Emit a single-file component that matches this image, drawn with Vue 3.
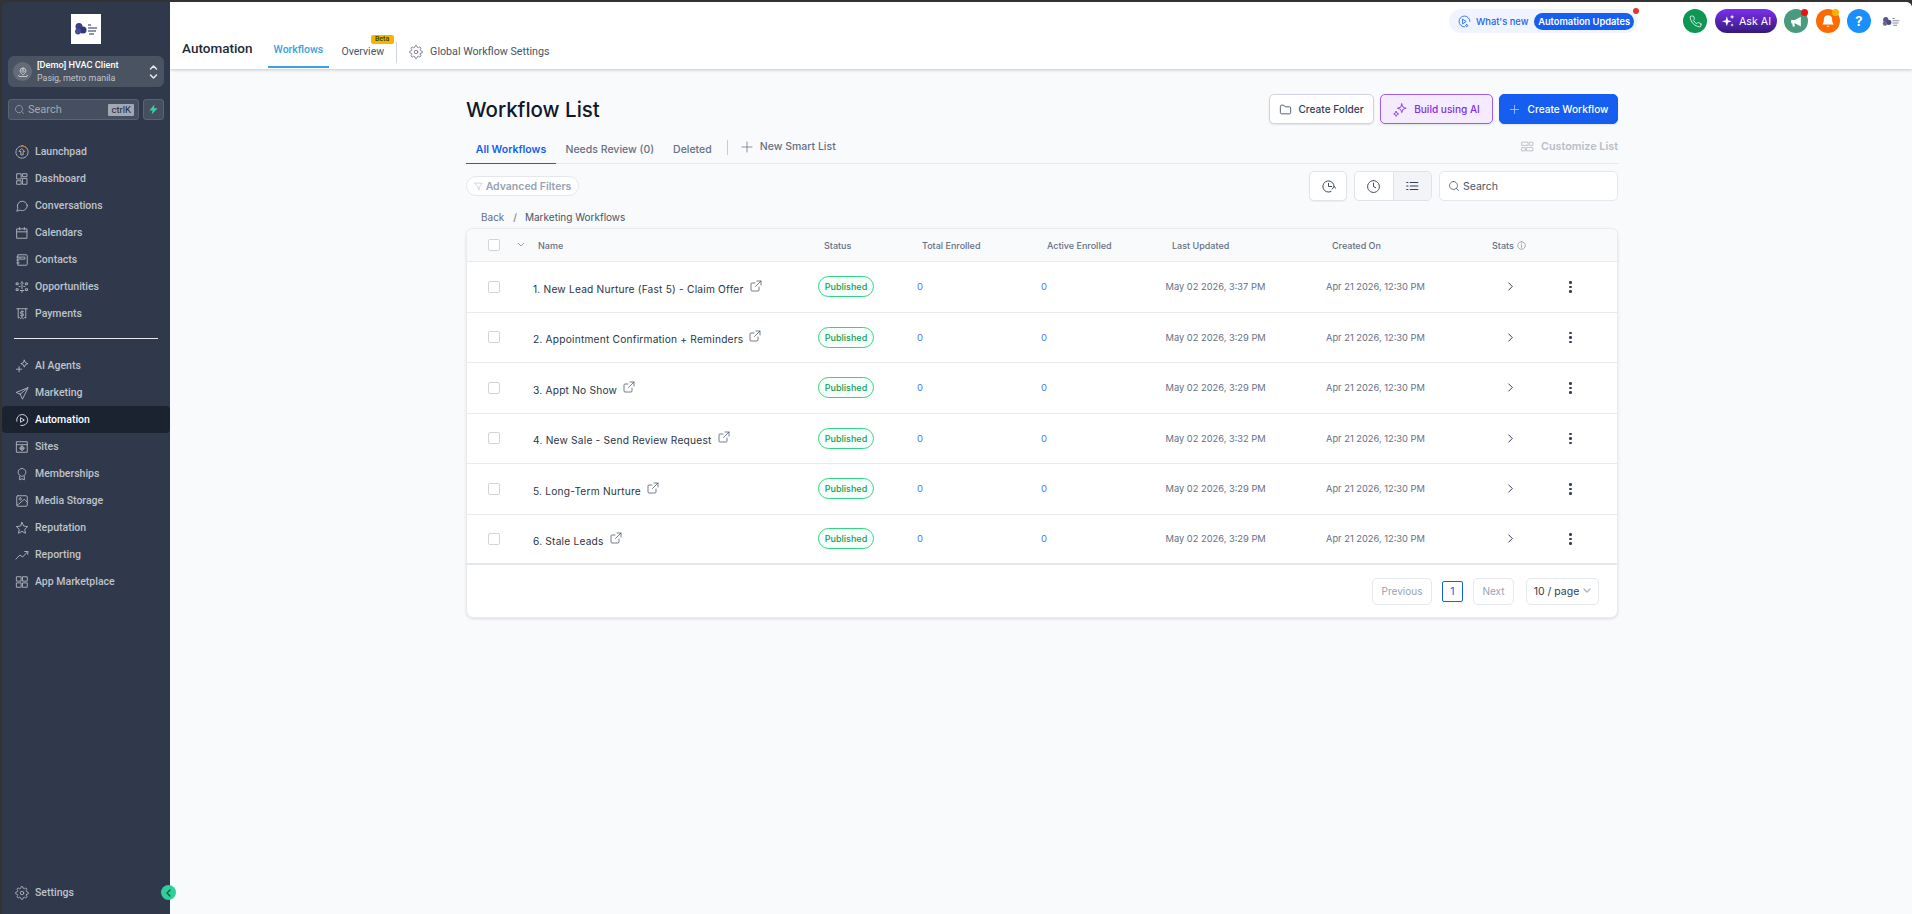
<script setup>
const gear = 'M19.4 15a1.65 1.65 0 0 0 .33 1.82l.06.06a2 2 0 0 1 0 2.83 2 2 0 0 1-2.83 0l-.06-.06a1.65 1.65 0 0 0-1.82-.33 1.65 1.65 0 0 0-1 1.51V21a2 2 0 0 1-2 2 2 2 0 0 1-2-2v-.09A1.65 1.65 0 0 0 9 19.4a1.65 1.65 0 0 0-1.82.33l-.06.06a2 2 0 0 1-2.83 0 2 2 0 0 1 0-2.83l.06-.06a1.65 1.65 0 0 0 .33-1.82 1.65 1.65 0 0 0-1.51-1H3a2 2 0 0 1-2-2 2 2 0 0 1 2-2h.09A1.65 1.65 0 0 0 4.6 9a1.65 1.65 0 0 0-.33-1.82l-.06-.06a2 2 0 0 1 0-2.83 2 2 0 0 1 2.83 0l.06.06a1.65 1.65 0 0 0 1.82.33H9a1.65 1.65 0 0 0 1-1.51V3a2 2 0 0 1 2-2 2 2 0 0 1 2 2v.09a1.65 1.65 0 0 0 1 1.51 1.65 1.65 0 0 0 1.82-.33l.06-.06a2 2 0 0 1 2.83 0 2 2 0 0 1 0 2.83l-.06.06a1.65 1.65 0 0 0-.33 1.82V9a1.65 1.65 0 0 0 1.51 1H21a2 2 0 0 1 2 2 2 2 0 0 1-2 2h-.09a1.65 1.65 0 0 0-1.51 1zM15 12a3 3 0 1 1-6 0 3 3 0 0 1 6 0z'

const navTop = [
  { label: 'Launchpad', accent: 'M12 1.500a10.500 10.500 0 0 1 9.800 6.700', paths: ['M12 1.500a10.500 10.500 0 1 0 .01 0', 'M12 6.500l4.500 4.500H14v6h-4v-6H7.500z'] },
  { label: 'Dashboard', paths: ['M3.5 3h7v9h-7z', 'M13.5 3h7v5h-7z', 'M13.5 11h7v10h-7z', 'M3.5 15h7v6h-7z'] },
  { label: 'Conversations', paths: ['M21 11.5a8.5 8.5 0 0 1-12.4 7.5L3 21l1.8-5.2A8.5 8.5 0 1 1 21 11.5z'] },
  { label: 'Calendars', paths: ['M3.5 5h17v16h-17z', 'M3.5 10h17', 'M8 2.5v4', 'M16 2.5v4'] },
  { label: 'Contacts', paths: ['M5.5 3h14a1.5 1.5 0 0 1 1.5 1.5v15a1.5 1.5 0 0 1-1.5 1.5h-14z', 'M9 7h8v3.5H9z', 'M3 7h4', 'M3 12h4', 'M3 17h4'] },
  { label: 'Opportunities', paths: ['M12 3.5a2 2 0 1 0 .01 0', 'M12 9v6', 'M9 18h6', 'M2.5 5h3v3h-3z', 'M18.5 5h3v3h-3z', 'M2.5 15h3v3h-3z', 'M18.5 15h3v3h-3z', 'M7 11h2', 'M15 11h2', 'M12 18v3'] },
  { label: 'Payments', paths: ['M3 3h18', 'M5.5 3v16l2-1 2 2 2.500-2 2.500 2 2-2 2 1V3', 'M14.500 8h-3.500a1.700 1.700 0 0 0 0 3.500h2a1.700 1.700 0 0 1 0 3.500H9.500', 'M12 6.500v10'] },
]
const navBottom = [
  { label: 'AI Agents', paths: ['M16 2l1.800 4.200L22 8l-4.200 1.800L16 14l-1.800-4.200L10 8l4.200-1.800z', 'M7 13v9', 'M2.500 17.500h9'] },
  { label: 'Marketing', paths: ['M22 3L2 11l7 3 3.500 8z', 'M22 3L9 14', 'M9 14v-.5'] },
  { label: 'Automation', active: true, paths: ['M3 14A9.500 9.500 0 1 1 10 21.300', 'M10 8.500l6 3.500-6 3.500z'] },
  { label: 'Sites', paths: ['M3 3h18v18H3z', 'M3 8h18', 'M12 10.500a3.500 3.500 0 1 0 .01 0', 'M8.500 14h7', 'M12 10.500v7'] },
  { label: 'Memberships', paths: ['M12 2.500c2 0 2.500 1 4 1.500s2.500 2 2.500 4c0 1.500 .5 2-.5 3.500s-1.500 3-3 3.500-2 1-3 1-1.500-.5-3-1-2-2-3-3.500-.5-2-.5-3.500c0-2 1-3.500 2.500-4s2-1.500 4-1.500z', 'M8 16v6l4-2 4 2v-6'] },
  { label: 'Media Storage', paths: ['M5 3h14a2 2 0 0 1 2 2v14a2 2 0 0 1-2 2H5a2 2 0 0 1-2-2V5a2 2 0 0 1 2-2z', 'M3.500 19.500L16 9l5 5', 'M9 6.500a2 2 0 1 0 .01 0'] },
  { label: 'Reputation', paths: ['M12 2.500l2.900 6.200 6.800.9-5 4.700 1.300 6.700-6-3.300-6 3.300 1.300-6.700-5-4.700 6.800-.9z'] },
  { label: 'Reporting', paths: ['M1.500 19l7-7 4.500 3.500L22 6', 'M16.500 6H22v5'] },
  { label: 'App Marketplace', paths: ['M3 3h7.500v7.500H3z', 'M13.500 3H21v7.500h-7.500z', 'M3 13.500h7.500V21H3z', 'M13.500 13.500H21V21h-7.500z'] },
]

const workflows = [
  { name: '1. New Lead Nurture (Fast 5) - Claim Offer', updated: 'May 02 2026, 3:37 PM' },
  { name: '2. Appointment Confirmation + Reminders', updated: 'May 02 2026, 3:29 PM' },
  { name: '3. Appt No Show', updated: 'May 02 2026, 3:29 PM' },
  { name: '4. New Sale - Send Review Request', updated: 'May 02 2026, 3:32 PM' },
  { name: '5. Long-Term Nurture', updated: 'May 02 2026, 3:29 PM' },
  { name: '6. Stale Leads', updated: 'May 02 2026, 3:29 PM' },
]
</script>

<template>
  <div class="app">
    <aside class="sidebar">
      <div class="logo-wrap">
        <div class="logo">
          <svg width="24" height="14" viewBox="0 0 24 14">
            <circle cx="5" cy="4.500" r="3.500" fill="#3c3f86" />
            <circle cx="9" cy="8" r="3.500" fill="#33367a" />
            <circle cx="4" cy="9.500" r="3" fill="#4a4d97" />
            <path d="M14 3h3M14 6h9M14 9h8M15 12h5" stroke="#6d7099" stroke-width="1.300" />
          </svg>
        </div>
      </div>
      <div class="location">
        <span class="loc-avatar">
          <svg width="12" height="12" viewBox="0 0 24 24" class="stroke light">
            <path d="M12 4a6 6 0 0 0-6 6c0 3 6 8 6 8s6-5 6-8a6 6 0 0 0-6-6z" />
            <path d="M12 7.500a2.500 2.500 0 1 0 .01 0" />
            <path d="M4 18c-2 1-1 3 1 3h14c2 0 3-2 1-3" />
          </svg>
        </span>
        <span class="loc-text">
          <span class="loc-name">[Demo] HVAC Client</span>
          <span class="loc-sub">Pasig, metro manila</span>
        </span>
        <svg width="9" height="16" viewBox="0 0 9 16" class="stroke light">
          <path d="M1.500 5L4.500 2l3 3" />
          <path d="M1.500 11l3 3 3-3" />
        </svg>
      </div>
      <div class="search-row">
        <div class="side-search">
          <svg width="11" height="11" viewBox="0 0 24 24" class="stroke muted">
            <path d="M11 3a8 8 0 1 0 .01 0" />
            <path d="M21 21l-4.500-4.500" />
          </svg>
          <span class="side-search-text">Search</span>
          <span class="kbd">ctrlK</span>
        </div>
        <div class="bolt-box">
          <svg width="11" height="11" viewBox="0 0 24 24"><path d="M14 1L3 14h7l-2 9 13-14h-8z" fill="#2fd6a0" /></svg>
        </div>
      </div>

      <nav class="nav nav-top">
        <a v-for="item in navTop" :key="item.label" class="nav-item">
          <svg width="14" height="14" viewBox="0 0 24 24" class="stroke nav-icon">
            <path v-for="d in item.paths" :key="d" :d="d" />
            <path v-if="item.accent" :d="item.accent" class="accent" />
          </svg>
          <span>{{ item.label }}</span>
        </a>
      </nav>
      <div class="side-divider"></div>
      <nav class="nav">
        <a v-for="item in navBottom" :key="item.label" class="nav-item" :class="{ active: item.active }">
          <svg width="14" height="14" viewBox="0 0 24 24" class="stroke nav-icon">
            <path v-for="d in item.paths" :key="d" :d="d" />
          </svg>
          <span>{{ item.label }}</span>
        </a>
      </nav>
      <div class="side-spacer"></div>
      <div class="nav-item settings">
        <svg width="14" height="14" viewBox="0 0 24 24" class="stroke nav-icon"><path :d="gear" /></svg>
        <span>Settings</span>
        <span class="collapse">
          <svg width="7" height="8" viewBox="0 0 7 8" class="stroke dark"><path d="M5 1L2 4l3 3" /></svg>
        </span>
      </div>
    </aside>

    <div class="main">
      <header class="topbar">
        <div class="top-left">
          <div class="page-name">Automation</div>
          <div class="top-tabs">
            <a class="top-tab current">Workflows</a>
            <a class="top-tab overview">Overview<span class="beta">Beta</span></a>
            <span class="top-sep"></span>
            <a class="top-settings">
              <svg width="14" height="14" viewBox="0 0 24 24" class="stroke gray"><path :d="gear" /></svg>
              Global Workflow Settings
            </a>
          </div>
        </div>
        <div class="top-right">
          <div class="whats-new">
            <svg width="13" height="13" viewBox="0 0 24 24" class="stroke blue">
              <path d="M12 22a10 10 0 1 1 10-10" />
              <path d="M9 8l6 4-6 4z" />
              <path d="M16 17.500a2 2 0 1 0 .01 0" />
            </svg>
            <span class="wn-text">What's new</span>
            <span class="wn-pill">Automation Updates</span>
            <span class="wn-dot"></span>
          </div>
          <span class="round phone">
            <svg width="13" height="13" viewBox="0 0 24 24" class="stroke white">
              <path d="M22 16.900v3a2 2 0 0 1-2.200 2 19.800 19.800 0 0 1-8.600-3 19.500 19.500 0 0 1-6-6 19.800 19.800 0 0 1-3-8.700A2 2 0 0 1 4.100 2h3a2 2 0 0 1 2 1.700c.1 1 .4 1.900.7 2.800a2 2 0 0 1-.5 2.100L8.100 9.900a16 16 0 0 0 6 6l1.300-1.300a2 2 0 0 1 2.100-.4c.9.300 1.800.6 2.800.7a2 2 0 0 1 1.700 2z" />
            </svg>
          </span>
          <span class="ask-ai">
            <svg width="14" height="14" viewBox="0 0 24 24" fill="#fff">
              <path d="M10 4l2 6.500L18.500 12.500 12 14.500 10 21 8 14.500 1.500 12.500 8 10.500z" />
              <path d="M19 1l1 3 3 1-3 1-1 3-1-3-3-1 3-1z" />
              <path d="M19 16l.8 2.200L22 19l-2.200.8L19 22l-.8-2.200L16 19l2.200-.8z" />
            </svg>
            Ask AI
          </span>
          <span class="round mega">
            <svg width="13" height="13" viewBox="0 0 24 24" fill="#fff">
              <path d="M2 9h7l11-6v18L9 15H8l1 6H5l-1-6H2z" />
            </svg>
            <span class="dot red"></span>
          </span>
          <span class="round bell">
            <svg width="14" height="14" viewBox="0 0 24 24" fill="#fff">
              <path d="M12 2a7 7 0 0 0-7 7c0 6-3 8-3 9h20c0-1-3-3-3-9a7 7 0 0 0-7-7z" />
              <path d="M9.500 20a2.600 2.600 0 0 0 5 0z" />
            </svg>
            <span class="dot amber"></span>
          </span>
          <span class="round help">?</span>
          <svg class="mini-logo" width="18" height="11" viewBox="0 0 24 14">
            <circle cx="5" cy="4.500" r="3.500" fill="#55588a" />
            <circle cx="9" cy="8" r="3.500" fill="#4b4e80" />
            <circle cx="4" cy="9.500" r="3" fill="#65688f" />
            <path d="M14 3h3M14 6h9M14 9h8M15 12h5" stroke="#85879f" stroke-width="1.300" />
          </svg>
        </div>
      </header>

      <main class="content">
        <div class="container">
          <div class="head-row">
            <h1>Workflow List</h1>
            <div class="head-actions">
              <button class="btn btn-white">
                <svg width="13" height="13" viewBox="0 0 24 24" class="stroke ink">
                  <path d="M2.500 6a2 2 0 0 1 2-2h4.500l2.500 3h8a2 2 0 0 1 2 2v9a2 2 0 0 1-2 2h-15a2 2 0 0 1-2-2z" />
                </svg>
                Create Folder
              </button>
              <button class="btn btn-ai">
                <svg width="15" height="15" viewBox="0 0 24 24" class="stroke purple">
                  <path d="M14 3l1.800 5.200L21 10l-5.200 1.800L14 17l-1.800-5.200L7 10l5.200-1.800z" />
                  <path d="M5 15l1.300 2.700L9 19l-2.700 1.300L5 23l-1.300-2.700L1 19l2.700-1.300z" />
                </svg>
                Build using AI
              </button>
              <button class="btn btn-primary">
                <svg width="11" height="11" viewBox="0 0 24 24" class="stroke soft"><path d="M12 3v18M3 12h18" /></svg>
                Create Workflow
              </button>
            </div>
          </div>

          <div class="tabs-row">
            <a class="tab selected">All Workflows</a>
            <a class="tab">Needs Review (0)</a>
            <a class="tab">Deleted</a>
            <span class="tab-sep"></span>
            <a class="smart">
              <svg width="12" height="12" viewBox="0 0 24 24" class="stroke gray"><path d="M12 2v20M2 12h20" /></svg>
              New Smart List
            </a>
            <a class="customize">
              <svg width="13" height="13" viewBox="0 0 24 24" class="stroke pale">
                <path d="M2 4h11v6H2z" /><path d="M16 4h6v6h-6z" /><path d="M2 14h6v6H2z" /><path d="M11 14h11v6H11z" />
              </svg>
              Customize List
            </a>
          </div>

          <div class="toolbar">
            <span class="filter-chip">
              <svg width="9" height="9" viewBox="0 0 24 24" class="stroke pale"><path d="M2 3h20l-8 10v8l-4-3v-5z" /></svg>
              Advanced Filters
            </span>
            <div class="tool-right">
              <span class="icon-btn">
                <svg width="15" height="15" viewBox="0 0 24 24" class="stroke ink">
                  <path d="M21 12a9 9 0 1 0-5 8.100" /><path d="M12 7v5h5" /><path d="M18 16l3-4 2.500 3" />
                </svg>
              </span>
              <div class="btn-group">
                <span class="group-cell">
                  <svg width="15" height="15" viewBox="0 0 24 24" class="stroke ink">
                    <path d="M12 2.500a9.500 9.500 0 1 0 .01 0" /><path d="M12 6.500V12l3.500 2" />
                  </svg>
                </span>
                <span class="group-cell on">
                  <svg width="14" height="14" viewBox="0 0 24 24" class="stroke ink thick">
                    <path d="M9 6h13M9 12h13M9 18h13" /><path d="M3 6h2M3 12h2M3 18h2" />
                  </svg>
                </span>
              </div>
              <div class="search-box">
                <svg width="12" height="12" viewBox="0 0 24 24" class="stroke ink">
                  <path d="M11 3a8 8 0 1 0 .01 0" /><path d="M21 21l-4.500-4.500" />
                </svg>
                Search
              </div>
            </div>
          </div>

          <div class="crumbs">
            <span>Back</span><span class="crumb-slash">/</span><span class="crumb-now">Marketing Workflows</span>
          </div>

          <section class="card">
            <div class="thead">
              <span class="th-check"><span class="checkbox"></span></span>
              <svg class="th-caret" width="8" height="6" viewBox="0 0 8 6"><path d="M1 1l3 3 3-3" /></svg>
              <span>Name</span>
              <span>Status</span>
              <span>Total Enrolled</span>
              <span>Active Enrolled</span>
              <span>Last Updated</span>
              <span>Created On</span>
              <span class="th-stats">Stats
                <svg width="9" height="9" viewBox="0 0 24 24" class="stroke gray">
                  <path d="M12 2a10 10 0 1 0 .01 0" stroke-dasharray="3 2" /><path d="M12 11v6M12 7v1" />
                </svg>
              </span>
            </div>
            <div v-for="wf in workflows" :key="wf.name" class="trow">
              <span class="td-check"><span class="checkbox"></span></span>
              <span class="td-name">
                {{ wf.name }}
                <svg width="12" height="12" viewBox="0 0 24 24" class="stroke ext">
                  <path d="M18 14v6a2 2 0 0 1-2 2H4a2 2 0 0 1-2-2V8a2 2 0 0 1 2-2h6" />
                  <path d="M14 2h8v8" /><path d="M22 2L11 13" />
                </svg>
              </span>
              <span class="td-status"><span class="badge">Published</span></span>
              <span class="num">0</span>
              <span class="num">0</span>
              <span class="date">{{ wf.updated }}</span>
              <span class="date">Apr 21 2026, 12:30 PM</span>
              <span class="td-chev">
                <svg width="9" height="9" viewBox="0 0 10 10" class="stroke ink hair"><path d="M3 1l4 4-4 4" /></svg>
              </span>
              <span class="kebab"><i></i><i></i><i></i></span>
            </div>
            <div class="pager">
              <span class="page-btn">Previous</span>
              <span class="page-num">1</span>
              <span class="page-btn">Next</span>
              <span class="page-size">10 / page
                <svg width="8" height="6" viewBox="0 0 8 6" class="stroke pale"><path d="M1 1l3 3 3-3" /></svg>
              </span>
            </div>
          </section>
        </div>
      </main>
    </div>
  </div>
</template>

<style>
html, body { margin: 0; background: #2e2e2e; }
</style>

<style scoped>
* { box-sizing: border-box; }
.app { display: flex; width: 1912px; height: 914px; padding: 2px 0 0 2px; background: #333; overflow: hidden; font-family: Inter, sans-serif; }
.stroke { fill: none; stroke: currentColor; stroke-width: 1.500; stroke-linecap: round; stroke-linejoin: round; flex: none; }
.stroke.thick { stroke-width: 2; }
.stroke.hair { stroke-width: 1.100; }
.light { color: #e6e8eb; }
.muted { color: #a5abb5; }
.dark { color: #14532d; stroke-width: 1.300; }
.gray { color: #667085; }
.blue { color: #155eef; }
.white { color: #fff; }
.ink { color: #344054; }
.purple { color: #8b3fe8; }
.soft { color: #c9d8fb; }
.pale { color: #b4b9c2; }
.ext { color: #475467; }
.accent { stroke: #e07b2e; }

/* sidebar */
.sidebar { width: 168px; flex: none; display: flex; flex-direction: column; background: #2f394b; font-family: Roboto, sans-serif; border-radius: 6px 0 0 0; }
.logo-wrap { display: flex; justify-content: center; padding-top: 12px; }
.logo { width: 30px; height: 30px; background: #fff; display: flex; align-items: center; justify-content: center; }
.location { display: flex; align-items: center; height: 31px; margin: 12px 6px 0; padding: 0 6px 0 5px; background: #4a5362; border-radius: 6px; }
.loc-avatar { width: 19px; height: 19px; border-radius: 50%; background: #646c79; display: flex; align-items: center; justify-content: center; flex: none; }
.loc-text { flex: 1; display: flex; flex-direction: column; margin-left: 5px; line-height: 12.500px; }
.loc-name { font-size: 9.200px; font-weight: 500; color: #fff; white-space: nowrap; }
.loc-sub { font-size: 8.900px; color: #c0c4cb; white-space: nowrap; }
.search-row { display: flex; gap: 4px; margin: 12px 6px 0; }
.side-search { display: flex; align-items: center; width: 131px; height: 21px; padding: 0 4px 0 5px; background: #454f5f; border: 1px solid #5b6473; border-radius: 3px; }
.side-search-text { flex: 1; margin-left: 3px; font-size: 11px; color: #a3a9b3; }
.kbd { background: #a2a8b2; color: #1f2937; font-size: 9.500px; line-height: 12px; padding: 0 3px; border-radius: 1px; }
.bolt-box { width: 21px; height: 21px; display: flex; align-items: center; justify-content: center; background: #454f5f; border: 1px solid #5b6473; border-radius: 3px; }
.nav { display: flex; flex-direction: column; }
.nav-top { margin-top: 18px; }
.nav-item { display: flex; align-items: center; gap: 6px; height: 27px; padding-left: 13px; color: #bfc3ca; font-size: 10.500px; font-weight: 500; border-radius: 4px; position: relative; }
.nav-item.active { background: #1b2230; color: #fff; }
.nav-icon { color: #b8bcc4; }
.nav-item.active .nav-icon { color: #e5e7eb; }
.side-divider { height: 1px; background: #e8eaee; margin: 11px 12px 13px; }
.side-spacer { flex: 1; }
.settings { margin-bottom: 8px; overflow: visible; }
.collapse { position: absolute; right: -6px; top: 6px; width: 15px; height: 15px; border-radius: 50%; background: #2dd09b; display: flex; align-items: center; justify-content: center; z-index: 2; }

/* top bar */
.main { flex: 1; min-width: 0; display: flex; flex-direction: column; background: #f9fafb; border-radius: 0 6px 0 0; overflow: hidden; }
.topbar { height: 67px; flex: none; background: #fff; display: flex; align-items: flex-start; justify-content: space-between; box-shadow: 0 1px 3px rgba(16, 24, 40, .22); position: relative; z-index: 1; }
.top-left { display: flex; align-items: flex-end; height: 66px; padding-left: 12px; }
.page-name { font-family: Roboto, sans-serif; font-size: 13.500px; font-weight: 500; color: #1f2937; line-height: 20px; margin-bottom: 10px; }
.top-tabs { display: flex; align-items: flex-end; margin-left: 15px; font-family: Roboto, sans-serif; font-size: 10.500px; color: #475467; }
.top-tab { padding: 0 6px 8px; line-height: 16px; }
.top-tab.current { color: #38a1e0; font-weight: 500; border-bottom: 2px solid #38a1e0; width: 61px; }
.overview { position: relative; margin-left: 13px; padding: 0 0 8px; }
.beta { position: absolute; left: 29px; top: -9px; width: 23px; height: 9px; background: #f5b400; border-radius: 2px; color: #4a3a00; font-size: 7px; font-weight: 500; line-height: 9px; text-align: center; }
.top-sep { width: 1px; height: 21px; background: #d0d5dd; margin: 0 12px 5px 12px; }
.top-settings { display: flex; align-items: center; gap: 7px; line-height: 16px; padding-bottom: 8px; font-size: 10.700px; }
.top-right { display: flex; align-items: center; height: 24px; margin-top: 7px; padding-right: 12px; }
.whats-new { position: relative; display: flex; align-items: center; width: 189px; height: 24px; padding: 0 4px 0 9px; border-radius: 12px; background: #eff4ff; margin-right: 45px; }
.wn-text { margin-left: 5px; font-size: 9.300px; font-weight: 500; color: #2563eb; white-space: nowrap; }
.wn-pill { margin-left: 6px; height: 17px; width: 101px; border-radius: 9px; background: #155eef; color: #fff; font-size: 9.300px; font-weight: 600; line-height: 17px; text-align: center; white-space: nowrap; }
.wn-dot { position: absolute; right: -1px; top: -1px; width: 6px; height: 6px; border-radius: 50%; background: #e5342a; }
.round { position: relative; width: 24px; height: 24px; border-radius: 50%; display: flex; align-items: center; justify-content: center; flex: none; }
.phone { background: #0e9655; margin-right: 8px; }
.ask-ai { display: flex; align-items: center; justify-content: center; gap: 4px; width: 62px; height: 24px; border-radius: 12px; background: linear-gradient(180deg, #7c2ff0 0%, #351a78 100%); color: #fff; font-size: 10.700px; margin-right: 7px; }
.mega { background: #4a9a80; margin-right: 8px; }
.bell { background: #ff6a00; margin-right: 7px; }
.help { background: #1a90ff; color: #fff; font: 700 13px/24px Inter, sans-serif; margin-right: 11px; }
.dot { position: absolute; right: 0; top: 0; width: 7px; height: 7px; border-radius: 50%; }
.dot.red { background: #f01010; }
.dot.amber { background: #f7b500; right: 1px; }
.mini-logo { flex: none; }

/* content */
.content { flex: 1; padding: 25px 0 0 296px; overflow: hidden; }
.container { width: 1152px; }
.head-row { display: flex; align-items: center; justify-content: space-between; height: 30px; }
h1 { margin: 0; padding-top: 1px; font-size: 20.500px; font-weight: 500; color: #101828; line-height: 30px; }
.head-actions { display: flex; gap: 6px; }
.btn { display: flex; align-items: center; justify-content: center; height: 30px; border-radius: 5px; font-family: Inter, sans-serif; font-size: 10.100px; font-weight: 500; padding: 0; gap: 6px; box-shadow: 0 1px 2px rgba(16, 24, 40, .1); }
.btn-white { width: 105px; background: #fff; border: 1px solid #d0d5dd; color: #344054; }
.btn-ai { width: 113px; background: #f4ebff; border: 1px solid #9e5cf0; color: #7f2fe6; }
.btn-primary { width: 119px; background: #155eef; border: 1px solid #155eef; color: #fff; gap: 8px; }
.tabs-row { display: flex; align-items: center; height: 40px; border-bottom: 1px solid #e4e7ec; }
.tab { height: 40px; display: flex; align-items: center; padding: 12px 9.500px 0; font-size: 10.500px; font-weight: 500; color: #667085; white-space: nowrap; border-bottom: 1px solid transparent; }
.tab.selected { color: #155eef; font-weight: 600; border-bottom: 1px solid #155eef; margin-bottom: -1px; width: 90px; justify-content: center; }
.tab-sep { width: 1px; height: 15px; background: #c8ccd3; margin: 7px 13px 0 5.500px; }
.smart { display: flex; align-items: center; gap: 7px; font-size: 10.500px; font-weight: 500; color: #667085; padding-top: 6px; }
.customize { margin-left: auto; display: flex; align-items: center; gap: 7px; font-size: 10.800px; font-weight: 600; color: #b9bec7; padding-top: 6px; }
.toolbar { display: flex; align-items: center; justify-content: space-between; margin-top: 7px; height: 30px; }
.filter-chip { display: inline-flex; align-items: center; gap: 3px; width: 113px; height: 20px; justify-content: center; border: 1px solid #e4e7ec; background: #fff; border-radius: 10px; font-size: 10.500px; font-weight: 600; color: #98a2b3; white-space: nowrap; }
.tool-right { display: flex; gap: 7px; }
.icon-btn { width: 38px; height: 30px; display: flex; align-items: center; justify-content: center; background: #fff; border: 1px solid #e0e3e8; border-radius: 5px; box-shadow: 0 1px 1px rgba(16, 24, 40, .05); }
.btn-group { display: flex; width: 78px; height: 30px; background: #fff; border: 1px solid #e0e3e8; border-radius: 5px; overflow: hidden; }
.group-cell { flex: 1; display: flex; align-items: center; justify-content: center; }
.group-cell.on { background: #f2f4f7; border-left: 1px solid #e0e3e8; }
.search-box { width: 179px; height: 30px; display: flex; align-items: center; gap: 3px; padding-left: 8px; background: #fff; border: 1px solid #e4e7ec; border-radius: 5px; font-size: 10.500px; color: #475467; }
.crumbs { display: flex; align-items: center; height: 14px; margin-top: 9px; padding-left: 15px; font-size: 10px; color: #667085; }
.crumb-slash { margin: 0 8px 0 9px; }
.crumb-now { color: #475467; }
.card { margin-top: 4px; background: #fff; border: 1px solid #e8eaee; border-radius: 7px; box-shadow: 0 1px 3px rgba(16, 24, 40, .12); overflow: hidden; }
.thead { display: grid; grid-template-columns: 21px 29px 21px 286px 98px 125px 125px 160px 160px 1fr; align-items: center; height: 33px; background: #f9fafb; border-bottom: 1px solid #e8eaee; font-size: 9px; font-weight: 500; color: #667085; white-space: nowrap; }
.th-check { display: flex; grid-column: 1 / 3; padding-left: 21px; }
.th-caret { fill: none; stroke: #98a2b3; stroke-width: 1; }
.th-stats { display: flex; align-items: center; gap: 3px; }
.checkbox { display: block; width: 12px; height: 12px; background: #fff; border: 1px solid #d0d5dd; border-radius: 2px; }
.trow { display: grid; grid-template-columns: 66px 285px 99px 124px 124.500px 160.500px 179px 64px 1fr; align-items: center; height: 50.500px; border-bottom: 1px solid #e9ebef; white-space: nowrap; }
.trow:nth-of-type(7) { border-bottom: 2px solid #e4e7ec; }
.td-check { padding-left: 21px; display: flex; }
.td-name { display: flex; align-items: center; gap: 6px; padding-top: 4px; font-size: 10.200px; color: #2b3544; letter-spacing: .2px; }
.td-name svg { margin-top: -6px; }
.td-status { display: flex; }
.badge { display: block; width: 56px; height: 21px; line-height: 19px; text-align: center; border: 1px solid #32d583; border-radius: 11px; background: #f6fef9; color: #12a05a; font-size: 9px; font-weight: 500; }
.num { font-size: 9.500px; color: #4b7bec; }
.date { font-size: 9.300px; color: #667085; }
.td-chev { display: flex; padding-left: 1px; }
.kebab { display: flex; flex-direction: column; gap: 2px; }
.kebab i { display: block; width: 2.500px; height: 2.500px; border-radius: 50%; background: #344054; }
.pager { display: flex; align-items: center; justify-content: flex-end; height: 52px; padding-right: 18px; }
.page-btn { height: 27px; display: flex; align-items: center; padding: 0 8.500px; border: 1px solid #e4e7ec; border-radius: 5px; font-size: 10px; color: #98a2b3; }
.page-num { width: 21px; height: 21px; display: flex; align-items: center; justify-content: center; border: 1px solid #155eef; border-radius: 2px; color: #155eef; font-size: 10.500px; margin: 0 10px; }
.page-size { margin-left: 12px; height: 27px; width: 73px; display: flex; align-items: center; justify-content: center; gap: 4px; border: 1px solid #e4e7ec; border-radius: 5px; font-size: 10.500px; color: #344054; white-space: nowrap; }
</style>
